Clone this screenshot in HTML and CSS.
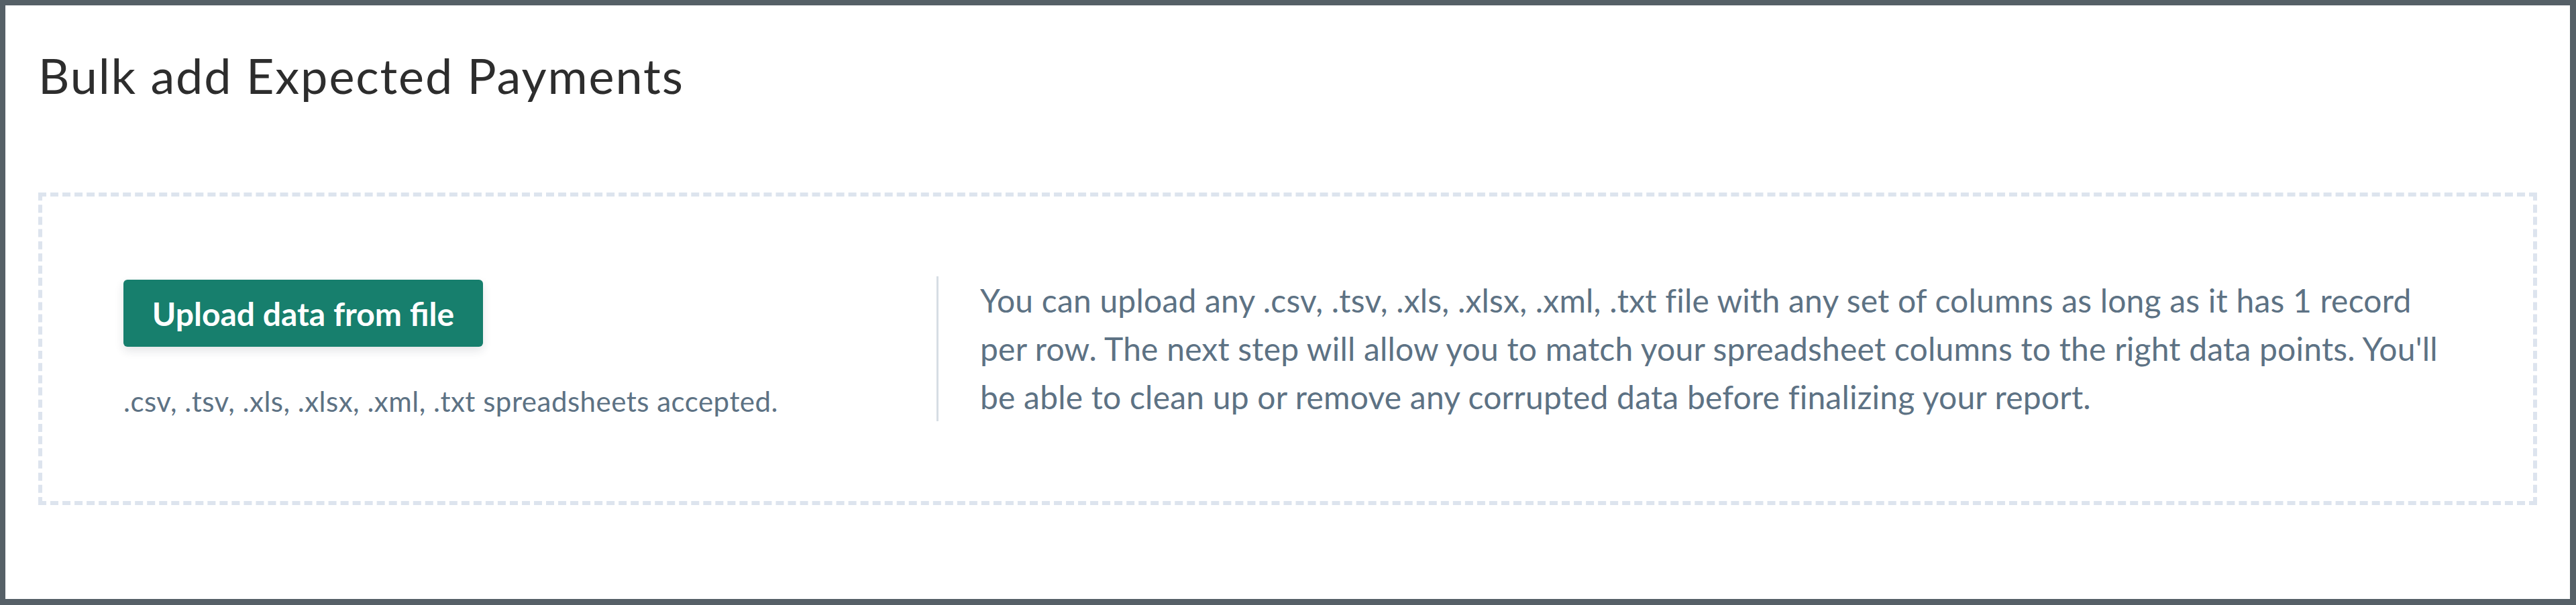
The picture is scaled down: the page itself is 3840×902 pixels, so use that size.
FILE: index.html
```html
<!DOCTYPE html>
<html lang="en">
<head>
  <meta charset="UTF-8">
  <meta name="viewport" content="width=device-width, initial-scale=1.0">
  <title>Bulk add Expected Payments</title>
  <link rel="stylesheet" href="styles.css">
</head>
<body>
  <div class="panel">
    <h1>Bulk add Expected Payments</h1>
    <div class="dropzone">
      <div class="upload-col">
        <button type="button" class="btn-upload">Upload data from file</button>
        <p class="hint">.csv, .tsv, .xls, .xlsx, .xml, .txt spreadsheets accepted.</p>
      </div>
      <div class="info-col">
        <p>You can upload any .csv, .tsv, .xls, .xlsx, .xml, .txt file with any set of columns as long as it has 1 record per row. The next step will allow you to match your spreadsheet columns to the right data points. You'll be able to clean up or remove any corrupted data before finalizing your report.</p>
      </div>
    </div>
  </div>
</body>
</html>
```

FILE: styles.css
```css
*{box-sizing:border-box;margin:0;padding:0;font-family:Lato,"Liberation Sans",sans-serif}
html,body{height:100%}
body{background:#566067;padding:8px 9px 9px 8px}
.panel{background:#fff;height:100%;padding:61px 49px 0 49px}
h1{font-size:72px;line-height:86px;font-weight:400;letter-spacing:1.9px;color:#2d2d2d;margin-bottom:132px}
.dropzone{height:466px;border:6px dashed #dde4ee;display:flex;align-items:center;padding-left:121px}
.upload-col{flex:0 0 1212px;display:flex;flex-direction:column;align-items:flex-start}
.btn-upload{width:536px;height:100px;background:#177f6d;color:#fff;border:none;border-radius:6px;font-size:48px;font-weight:700;box-shadow:0 6px 14px rgba(30,40,60,0.12);cursor:pointer}
.hint{margin-top:56px;font-size:42px;line-height:50px;letter-spacing:0.5px;color:#5d7284}
.info-col{width:2250px;border-left:3px solid #d6dde4;padding-left:62px}
.info-col p{font-size:48px;line-height:72px;letter-spacing:0.2px;color:#5d7284}
```
